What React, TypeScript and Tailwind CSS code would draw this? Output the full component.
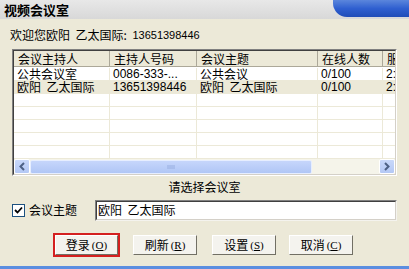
import React from "react";

const cols = [
  { w: 96, label: "会议主持人" },
  { w: 87, label: "主持人号码" },
  { w: 121, label: "会议主题" },
  { w: 65, label: "在线人数" },
  { w: 40, label: "服务器" },
];

const rows = [
  ["公共会议室", "0086-333-...", "公共会议", "0/100", "2:"],
  ["欧阳  乙太国际", "13651398446", "欧阳  乙太国际", "0/100", "2:"],
];

function Btn({ label, k, hot }: { label: string; k: string; hot?: boolean }) {
  return (
    <div className={hot ? "border-2 border-[#d42020]" : ""}>
      <div className={`${hot ? "w-[63px]" : "w-[64px]"} h-[20px] flex items-center justify-center bg-[#f4f3ee] border border-t-white border-l-white border-r-[#716f64] border-b-[#716f64] text-[12px] text-black`}>
        <span>{label}</span>
        <span className="ml-[2px] text-[11px]" style={{ fontFamily: "'Liberation Serif', serif" }}>
          (<span className="underline">{k}</span>)
        </span>
      </div>
    </div>
  );
}

export default function App() {
  return (
    <div
      className="w-[409px] h-[269px] bg-[#ece9d8] flex flex-col overflow-hidden relative"
      style={{ fontFamily: "'Noto Sans CJK SC', 'Liberation Sans', sans-serif" }}
    >
      <div className="h-[19px] shrink-0 bg-gradient-to-b from-[#e8e8e8] to-[#d8d8d8] flex items-center pl-[4px] relative">
        <span className="text-[13px] font-bold text-black leading-none">视频会议室</span>
        <div className="absolute right-0 top-0 w-[76px] h-[17px] rounded-bl-[14px] bg-gradient-to-b from-[#5b86dc] via-[#2f5fd0] to-[#1f4cb8]" />
      </div>
      <div className="h-[30px] shrink-0 flex items-center pl-[10px] text-[12px] text-black pt-[2px] whitespace-pre">
        欢迎您欧阳  乙太国际: <span style={{ fontFamily: "'Liberation Sans', sans-serif" }} className="ml-[3px] text-[11px]">13651398446</span>
      </div>
      <div className="ml-[12px] w-[385px] h-[127px] shrink-0 border border-t-[#808080] border-l-[#808080] border-r-white border-b-white">
        <div className="w-full h-full border border-t-[#404040] border-l-[#404040] border-r-[#d4d0c8] border-b-[#d4d0c8] bg-white flex flex-col overflow-hidden">
          <div className="flex h-[16px] shrink-0 bg-[#ece9d8] border-b border-[#aca899]">
            {cols.map((c, i) => (
              <div
                key={i}
                className="shrink-0 h-full flex items-center pl-[4px] text-[12px] leading-[14px] text-black border-r border-[#aca899] overflow-hidden whitespace-nowrap"
                style={{ width: c.w }}
              >
                {c.label}
              </div>
            ))}
          </div>
          <div className="flex-1 flex flex-col pt-[1px]">
            {[0, 1, 2, 3, 4, 5, 6].map((r) => (
              <div
                key={r}
                className={`flex h-[13px] shrink-0 border-b border-[#ece9d8] ${r === 1 ? "bg-[#ece9d8]" : "bg-white"}`}
              >
                {cols.map((c, i) => (
                  <div
                    key={i}
                    className="shrink-0 h-full flex items-center pl-[3px] text-[12px] text-black border-r border-[#ece9d8] overflow-hidden whitespace-pre leading-[12px]"
                    style={{ width: c.w, fontFamily: i === 1 || i === 3 || i === 4 ? "'Liberation Sans', sans-serif" : undefined }}
                  >
                    {rows[r] ? rows[r][i] : ""}
                  </div>
                ))}
              </div>
            ))}
          </div>
          <div className="h-[15px] shrink-0 flex bg-[#f5f4ea] items-center">
            <div className="w-[16px] h-[15px] rounded-[2px] bg-gradient-to-b from-[#c8d8fa] to-[#b4c8f4] border border-white flex items-center justify-center">
              <svg width="8" height="9" viewBox="0 0 8 9"><path d="M6 1 L2.5 4.5 L6 8" stroke="#4d6185" strokeWidth="2" fill="none" /></svg>
            </div>
            <div className="w-[282px] h-[14px] rounded-[2px] bg-gradient-to-b from-[#c6d6fb] to-[#b0c6f5] border border-[#e6eeff] flex items-center justify-center">
              <svg width="8" height="6" viewBox="0 0 8 6"><path d="M1 1v4M3 1v4M5 1v4M7 1v4" stroke="#98aee0" strokeWidth="1" /></svg>
            </div>
            <div className="flex-1" />
            <div className="w-[16px] h-[15px] rounded-[2px] bg-gradient-to-b from-[#c8d8fa] to-[#b4c8f4] border border-white flex items-center justify-center">
              <svg width="8" height="9" viewBox="0 0 8 9"><path d="M2 1 L5.5 4.5 L2 8" stroke="#4d6185" strokeWidth="2" fill="none" /></svg>
            </div>
          </div>
        </div>
      </div>
      <div className="ml-[12px] w-[385px] h-[20px] shrink-0 flex items-center justify-center text-[12px] text-black pt-[1px]">
        请选择会议室
      </div>
      <div className="h-[24px] shrink-0 flex items-center mt-[2px]">
        <div className="ml-[12px] w-[13px] h-[13px] bg-white border border-[#1c5180] flex items-center justify-center">
          <svg width="9" height="9" viewBox="0 0 9 9"><path d="M1 4 L3.5 6.5 L8 1.5" stroke="#000" strokeWidth="1.8" fill="none" /></svg>
        </div>
        <span className="ml-[4px] text-[12px] text-black">会议主题</span>
        <div className="ml-[18px] w-[302px] h-[21px] bg-white border border-t-[#808080] border-l-[#808080] border-r-[#f4f3ee] border-b-[#f4f3ee]">
          <div className="w-full h-full border border-t-[#404040] border-l-[#404040] border-r-[#d4d0c8] border-b-[#d4d0c8] flex items-center pl-[1px] text-[12px] text-black whitespace-pre">
            欧阳  乙太国际
          </div>
        </div>
      </div>
      <div className="flex items-center mt-[11px] pl-[53px]">
        <Btn label="登录" k="O" hot />
        <div className="ml-[13px]"><Btn label="刷新" k="R" /></div>
        <div className="ml-[15px]"><Btn label="设置" k="S" /></div>
        <div className="ml-[13px]"><Btn label="取消" k="C" /></div>
      </div>
      <div className="absolute left-0 right-0 bottom-0 h-[3px] bg-[#5b8ee0]" />
    </div>
  );
}
